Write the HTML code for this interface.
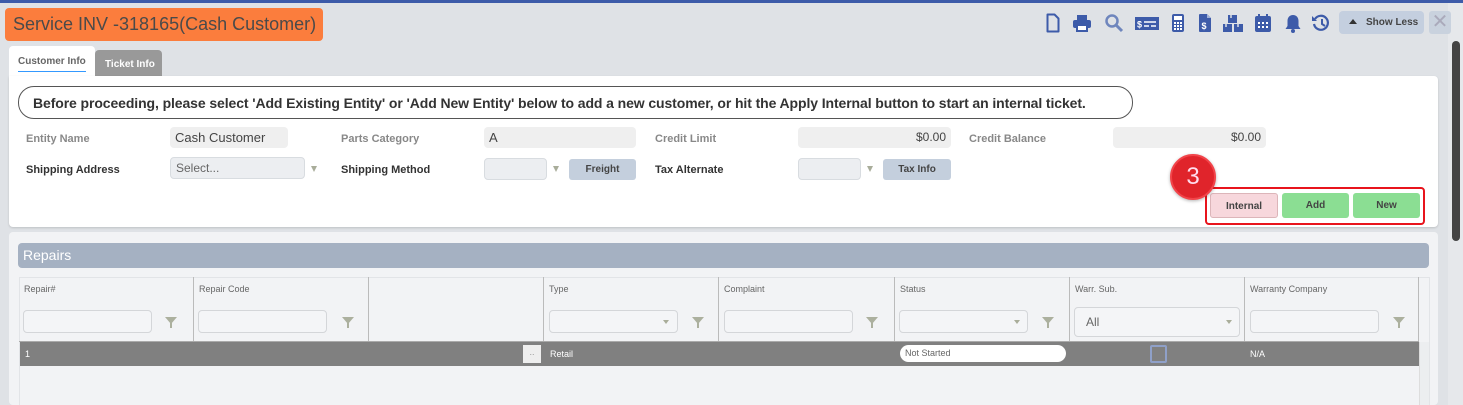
<!DOCTYPE html>
<html><head><meta charset="utf-8"><style>
*{margin:0;padding:0;box-sizing:border-box}
body{width:1463px;height:405px;overflow:hidden;background:#dfe2e6;font-family:"Liberation Sans",sans-serif;position:relative}
.a{position:absolute}
.lbl{position:absolute;font-size:11px;font-weight:bold;color:#333;white-space:nowrap}
.lg{color:#888}
.inp{position:absolute;background:#efefef;border-radius:4px;font-size:13px;color:#444;padding:3px 5px;height:21px;white-space:nowrap}
.sel{position:absolute;background:#eceef1;border:1px solid #d8dce0;border-radius:4px;font-size:12px;color:#666;padding:3px 5px;height:22px}
.arr{position:absolute;width:0;height:0;border-left:3px solid transparent;border-right:3px solid transparent;border-top:6px solid #a9ad9a}
.btn{position:absolute;background:#c4cfdd;border-radius:3px;font-size:10px;font-weight:bold;color:#444;text-align:center;line-height:21px;height:21px}
.col{position:absolute;top:277px;height:64px;border-left:1px solid #bbb;font-size:9px;color:#666;padding:7px 5px}
.fin{position:absolute;top:310px;width:129px;height:23px;border:1px solid #d4d6d9;border-radius:4px;background:#f4f5f7}
.fil{position:absolute;top:317px;width:0;height:0;border-left:6px solid transparent;border-right:6px solid transparent;border-top:7px solid #acb09e}
.filb{position:absolute;top:322px;width:2px;height:6px;background:#acb09e}
.ic{position:absolute;top:13px}
</style></head><body>
<div class="a" style="left:0;top:0;width:1463px;height:3px;background:#3d5ba9"></div>
<div class="a" style="left:1448px;top:3px;width:15px;height:402px;background:#e6e8eb"></div>
<div class="a" style="left:1452px;top:41px;width:8px;height:200px;background:#444;border-radius:4px"></div>

<div class="a" style="left:5px;top:8px;width:318px;height:33px;background:#fb7d3d;border-radius:4px;font-size:18px;letter-spacing:0px;white-space:nowrap;color:#4a4a4a;padding:6px 0 0 8px">Service INV -318165(Cash Customer)</div>

<svg class="ic" style="left:1046px" width="14" height="20" viewBox="0 0 14 20"><path d="M1.5 1.5h7l4 4v13h-11z" fill="none" stroke="#3d5ba9" stroke-width="2" stroke-linejoin="round"/></svg>
<svg class="ic" style="left:1072px" width="20" height="20" viewBox="0 0 20 20"><rect x="5" y="2" width="10" height="5" fill="#3d5ba9"/><rect x="1" y="7" width="18" height="8" rx="2" fill="#3d5ba9"/><rect x="5" y="12" width="10" height="6" fill="#fff" stroke="#3d5ba9" stroke-width="2"/></svg>
<svg class="ic" style="left:1104px" width="20" height="20" viewBox="0 0 20 20"><circle cx="8" cy="8" r="5.5" fill="none" stroke="#6f86bd" stroke-width="2.5"/><path d="M12 12l6 6" stroke="#6f86bd" stroke-width="3"/></svg>
<svg class="ic" style="left:1135px" width="24" height="20" viewBox="0 0 24 20"><rect x="0" y="4" width="24" height="13" fill="#3d5ba9"/><text x="2" y="14.5" font-size="9" font-weight="bold" fill="#fff" font-family="Liberation Sans">$</text><path d="M9 9h12M9 13h5M16 13h5" stroke="#fff" stroke-width="1.5"/></svg>
<svg class="ic" style="left:1170px" width="16" height="20" viewBox="0 0 16 20"><rect x="2" y="1" width="12" height="18" rx="2" fill="#3d5ba9"/><rect x="4" y="3" width="8" height="4" fill="#fff"/><g fill="#fff"><rect x="4" y="9" width="2" height="2"/><rect x="7" y="9" width="2" height="2"/><rect x="10" y="9" width="2" height="2"/><rect x="4" y="12" width="2" height="2"/><rect x="7" y="12" width="2" height="2"/><rect x="10" y="12" width="2" height="2"/><rect x="4" y="15" width="2" height="2"/><rect x="7" y="15" width="2" height="2"/><rect x="10" y="15" width="2" height="2"/></g></svg>
<svg class="ic" style="left:1197px" width="16" height="20" viewBox="0 0 16 20"><path d="M2 2a1 1 0 011-1h7l4 4v13a1 1 0 01-1 1H3a1 1 0 01-1-1z" fill="#3d5ba9"/><path d="M10 1v4h4" fill="#9fb0d8"/><text x="4.5" y="16" font-size="9" font-weight="bold" fill="#fff" font-family="Liberation Sans">$</text></svg>
<svg class="ic" style="left:1222px" width="22" height="20" viewBox="0 0 22 20"><rect x="6" y="2" width="9" height="8" fill="#3d5ba9"/><rect x="1" y="11" width="9" height="8" fill="#3d5ba9"/><rect x="12" y="11" width="9" height="8" fill="#3d5ba9"/><path d="M9 2v3M4 11v3M16 11v3" stroke="#dfe2e6" stroke-width="1.5"/></svg>
<svg class="ic" style="left:1254px" width="18" height="20" viewBox="0 0 18 20"><rect x="1" y="3" width="16" height="16" rx="2" fill="#3d5ba9"/><path d="M5 1v4M13 1v4" stroke="#3d5ba9" stroke-width="2"/><g fill="#fff"><rect x="4" y="9" width="2" height="2"/><rect x="8" y="9" width="2" height="2"/><rect x="12" y="9" width="2" height="2"/><rect x="4" y="13" width="2" height="2"/><rect x="8" y="13" width="2" height="2"/><rect x="12" y="13" width="2" height="2"/></g></svg>
<svg class="ic" style="left:1284px" width="18" height="20" viewBox="0 0 18 20"><path d="M9 2c-3.5 0-5.5 2.5-5.5 6v5L1.5 16h15l-2-3V8c0-3.5-2-6-5.5-6z" fill="#3d5ba9"/><circle cx="9" cy="18" r="2" fill="#3d5ba9"/></svg>
<svg class="ic" style="left:1311px" width="20" height="20" viewBox="0 0 20 20"><path d="M4 6a7 7 0 11-1 5" fill="none" stroke="#3d5ba9" stroke-width="2.2"/><path d="M1 3v5h5z" fill="#3d5ba9"/><path d="M11 6v5l3 2" fill="none" stroke="#3d5ba9" stroke-width="2"/></svg>
<div class="a" style="left:1339px;top:11px;width:85px;height:23px;background:#c4cfdf;border-radius:4px;font-size:10px;font-weight:bold;color:#444;line-height:23px;padding-left:27px">Show Less</div>
<div class="arr" style="left:1349px;top:19px;border-top:0;border-bottom:5px solid #333;border-left-width:4px;border-right-width:4px"></div>
<div class="a" style="left:1429px;top:11px;width:22px;height:23px;background:#c9d2de;border-radius:3px;color:#aab;font-size:20px;text-align:center;line-height:22px">✕</div>

<div class="a" style="left:9px;top:46px;width:86px;height:32px;background:#fff;border-radius:4px 4px 0 0;font-size:10px;font-weight:bold;color:#666;padding:10px 0 0 9px">Customer Info<div style="width:68px;height:1px;background:#39f;margin-top:4px"></div></div>
<div class="a" style="left:95px;top:50px;width:67px;height:26px;background:#999;border-radius:4px 4px 0 0;font-size:10px;font-weight:bold;color:#fff;padding:9px 0 0 10px">Ticket Info</div>

<div class="a" style="left:9px;top:76px;width:1429px;height:151px;background:#fff;border-radius:0 4px 4px 4px;box-shadow:0 1px 2px rgba(0,0,0,.15)"></div>
<div class="a" style="left:18px;top:86px;width:1115px;height:33px;border:1px solid #555;border-radius:16px;font-size:14px;letter-spacing:-0.1px;white-space:nowrap;font-weight:bold;color:#333;padding:8px 0 0 14px">Before proceeding, please select 'Add Existing Entity' or 'Add New Entity' below to add a new customer, or hit the Apply Internal button to start an internal ticket.</div>

<div class="lbl lg" style="left:26px;top:133px">Entity Name</div>
<div class="inp" style="left:170px;top:127px;width:118px">Cash Customer</div>
<div class="lbl lg" style="left:341px;top:133px">Parts Category</div>
<div class="inp" style="left:484px;top:127px;width:152px">A</div>
<div class="lbl lg" style="left:655px;top:133px">Credit Limit</div>
<div class="inp" style="left:798px;top:127px;width:153px;text-align:right;font-size:12px">$0.00</div>
<div class="lbl lg" style="left:969px;top:133px">Credit Balance</div>
<div class="inp" style="left:1113px;top:127px;width:153px;text-align:right;font-size:12px">$0.00</div>

<div class="lbl" style="left:26px;top:164px">Shipping Address</div>
<div class="sel" style="left:170px;top:157px;width:135px">Select...</div>
<div class="arr" style="left:311px;top:166px"></div>
<div class="lbl" style="left:341px;top:164px">Shipping Method</div>
<div class="sel" style="left:484px;top:158px;width:63px"></div>
<div class="arr" style="left:553px;top:166px"></div>
<div class="btn" style="left:569px;top:159px;width:67px">Freight</div>
<div class="lbl" style="left:655px;top:164px">Tax Alternate</div>
<div class="sel" style="left:798px;top:158px;width:63px"></div>
<div class="arr" style="left:867px;top:166px"></div>
<div class="btn" style="left:883px;top:159px;width:68px">Tax Info</div>

<div class="a" style="left:1205px;top:187px;width:220px;height:38px;border:2px solid #e8141c;border-radius:4px"></div>
<div class="btn" style="left:1210px;top:193px;width:68px;height:25px;line-height:25px;background:#f7d7dc;border:1px solid #dcb5b9">Internal</div>
<div class="btn" style="left:1282px;top:193px;width:67px;height:25px;line-height:25px;background:#8bde93">Add</div>
<div class="btn" style="left:1353px;top:193px;width:67px;height:25px;line-height:25px;background:#8bde93">New</div>
<div class="a" style="left:1170px;top:154px;width:46px;height:46px;border-radius:50%;background:#e0242b;border:2px solid #f2444a;box-shadow:0 1px 3px rgba(0,0,0,.3);color:#fde;font-size:24px;text-align:center;line-height:42px">3</div>

<div class="a" style="left:9px;top:232px;width:1429px;height:173px;background:#f2f3f5;border-radius:4px"></div>
<div class="a" style="left:18px;top:243px;width:1411px;height:25px;background:#a5b1c2;border-radius:4px;color:#fff;font-size:14px;padding:4px 0 0 5px">Repairs</div>
<div class="a" style="left:19px;top:277px;width:1411px;height:128px;border:1px solid #e2e4e7;border-bottom:0"></div>
<div class="a" style="left:19px;top:341px;width:1400px;height:1px;background:#aaa"></div>
<div class="col" style="left:19px;width:175px;border-left:0">Repair#</div>
<div class="col" style="left:193px;width:175px">Repair Code</div>
<div class="col" style="left:368px;width:175px"></div>
<div class="col" style="left:543px;width:175px">Type</div>
<div class="col" style="left:718px;width:176px">Complaint</div>
<div class="col" style="left:894px;width:175px">Status</div>
<div class="col" style="left:1069px;width:175px">Warr. Sub.</div>
<div class="col" style="left:1244px;width:175px;border-right:1px solid #bbb">Warranty Company</div>
<div class="fin" style="left:23px"></div><div class="fil" style="left:165px"></div><div class="filb" style="left:170px"></div>
<div class="fin" style="left:198px"></div><div class="fil" style="left:342px"></div><div class="filb" style="left:347px"></div>
<div class="fin" style="left:549px"></div><div class="arr" style="left:663px;top:320px;border-top-width:4px"></div><div class="fil" style="left:692px"></div><div class="filb" style="left:697px"></div>
<div class="fin" style="left:724px"></div><div class="fil" style="left:866px"></div><div class="filb" style="left:871px"></div>
<div class="fin" style="left:899px"></div><div class="arr" style="left:1014px;top:320px;border-top-width:4px"></div><div class="fil" style="left:1042px"></div><div class="filb" style="left:1047px"></div>
<div class="fin" style="left:1074px;top:307px;width:166px;height:30px;font-size:12px;color:#666;padding:7px 0 0 11px">All</div><div class="arr" style="left:1226px;top:320px;border-top-width:4px"></div>
<div class="fin" style="left:1250px"></div><div class="fil" style="left:1393px"></div><div class="filb" style="left:1398px"></div>

<div class="a" style="left:20px;top:342px;width:1399px;height:24px;background:#808080;color:#fff;font-size:9px;line-height:24px">
<span class="a" style="left:5px">1</span>
<span class="a" style="left:503px;top:3px;width:18px;height:18px;background:#eee;color:#999;text-align:center;line-height:14px">..</span>
<span class="a" style="left:530px">Retail</span>
<span class="a" style="left:880px;top:3px;width:166px;height:17px;background:#fff;border-radius:9px;color:#666;line-height:17px;padding-left:5px">Not Started</span>
<span class="a" style="left:1130px;top:3px;width:17px;height:18px;border:2px solid #8fa0c8;border-radius:2px"></span>
<span class="a" style="left:1230px">N/A</span>
</div>
<div class="a" style="left:1419px;top:342px;width:10px;height:63px;background:#eceef0;border-left:1px solid #ddd"></div>
</body></html>
